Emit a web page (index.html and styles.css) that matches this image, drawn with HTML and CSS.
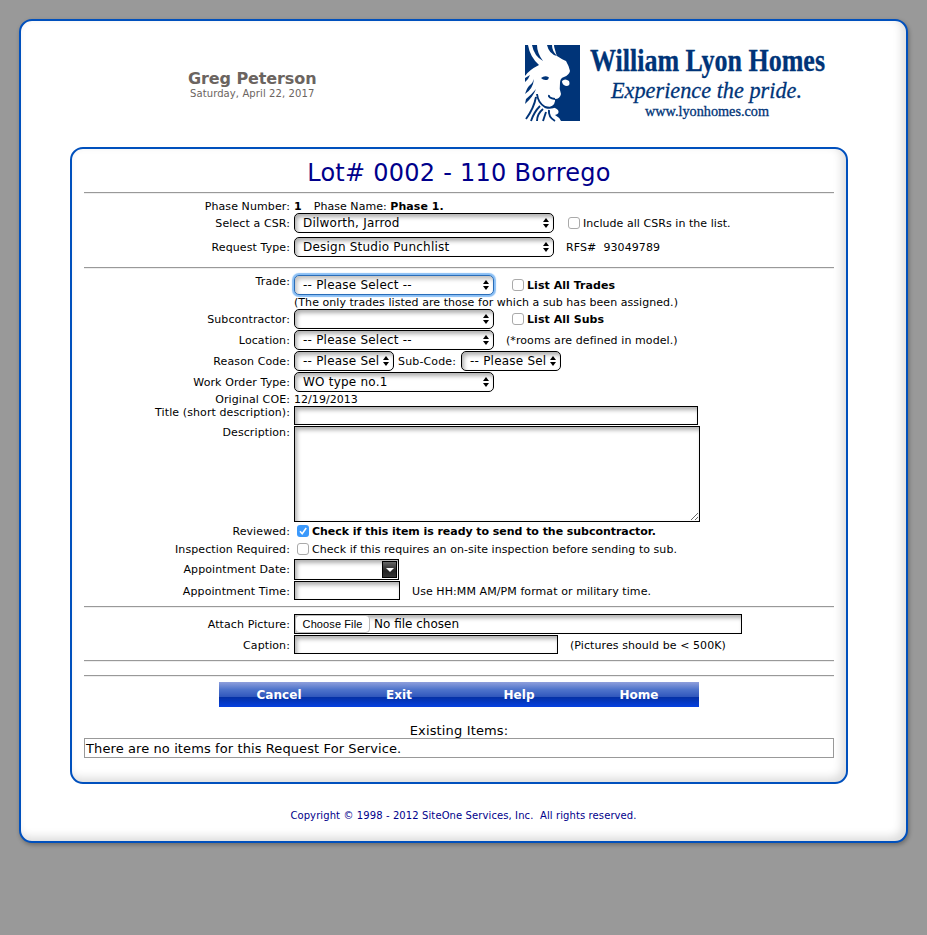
FILE: index.html
```html
<!DOCTYPE html>
<html lang="en">
<head>
<meta charset="utf-8">
<title>Lot# 0002 - 110 Borrego</title>
<link rel="stylesheet" href="styles.css">
</head>
<body>
<svg width="0" height="0" class="defs"><symbol id="arrows" viewBox="0 0 6 10"><path d="M3 0 6 4H0zM0 6h6L3 10z"/></symbol></svg>
<div class="frame">
  <header class="top">
    <div class="user"><div class="name">Greg Peterson</div><div class="date">Saturday, April 22, 2017</div></div>
    <svg class="logo" width="304" height="80" viewBox="0 0 304 80" role="img" aria-label="William Lyon Homes">
      <path class="navy" d="M0 0H55V76H0z"/>
      <path class="white" d="M3 0H32Q29 6 32 11Q38 15 41 16Q44 21 45 26Q44 30 39 32Q35 33 35 38Q34 44 36 49Q35 54 30 54Q31 59 25 62Q30 62 33 65Q35 69 30 70Q34 72 36 76H0V31Q4 25 14 20Q5 12 3 0z"/>
      <path class="navy" d="M7 0H12Q12 8 18 16Q9 11 7 0zM22 0H27Q27 6 32 11Q24 9 22 0zM29 0H32Q31 5 33 9Q29 5 29 0z"/>
      <path class="white" d="M37 36Q40 33 44 36Q46 41 41 41Q37 40 37 36z"/>
      <path class="navy" d="M16 33Q20 30 24 32.5L23 34.5Q19 36 16 33z"/>
      <path class="navy" d="M9 34Q8 44 0 49Q2 43 4 41Q8 38 9 34zM5 30 3 34 0 37V33zM11 44Q8 52 0 59L1 54Q7 49 11 44z"/>
      <path class="stroke" d="M24 50Q23 53 30 54"/>
      <path class="stroke" d="M12 49Q13 58 20 62Q26 64 31 61M11 52Q9 63 1 74M15 61Q9 67 6 76M18 64Q12 69 12 76M21 67 18 76M24 65Q23 72 30 76"/>
      <text class="brand" x="65" y="26" textLength="235" lengthAdjust="spacingAndGlyphs">William Lyon Homes</text>
      <text class="tagline" x="86" y="53" textLength="191" lengthAdjust="spacingAndGlyphs">Experience the pride.</text>
      <text class="site" x="120" y="71" textLength="124" lengthAdjust="spacingAndGlyphs">www.lyonhomes.com</text>
    </svg>
  </header>
  <main class="panel">
    <h1>Lot# 0002 - 110 Borrego</h1>
    <hr>
    <section class="group request">
      <div class="row line phase-row"><label>Phase Number:</label><div class="field"><b>1</b><span class="phase">Phase Name: <b>Phase 1.</b></span></div></div>
      <div class="row"><label>Select a CSR:</label><div class="field"><div class="select wide"><span>Dilworth, Jarrod</span><svg><use href="#arrows"/></svg></div><input class="check far" type="checkbox"><span class="caption-text">Include all CSRs in the list.</span></div></div>
      <div class="row spaced"><label>Request Type:</label><div class="field"><div class="select wide"><span>Design Studio Punchlist</span><svg><use href="#arrows"/></svg></div><span class="hint">RFS#&nbsp; 93049789</span></div></div>
    </section>
    <hr>
    <section class="group item">
      <div class="row trade"><label>Trade:</label><div class="field"><div class="select mid focus"><span>-- Please Select --</span><svg><use href="#arrows"/></svg></div><input class="check" type="checkbox"><b class="caption-text">List All Trades</b></div></div>
      <div class="row line note"><label></label><div class="field">(The only trades listed are those for which a sub has been assigned.)</div></div>
      <div class="row"><label>Subcontractor:</label><div class="field"><div class="select mid"><span></span><svg><use href="#arrows"/></svg></div><input class="check" type="checkbox"><b class="caption-text">List All Subs</b></div></div>
      <div class="row"><label>Location:</label><div class="field"><div class="select mid"><span>-- Please Select --</span><svg><use href="#arrows"/></svg></div><span class="hint">(*rooms are defined in model.)</span></div></div>
      <div class="row"><label>Reason Code:</label><div class="field"><div class="select small"><span>-- Please Sel</span><svg><use href="#arrows"/></svg></div><span class="sub">Sub-Code:</span><div class="select small"><span>-- Please Sel</span><svg><use href="#arrows"/></svg></div></div></div>
      <div class="row"><label>Work Order Type:</label><div class="field"><div class="select mid"><span>WO type no.1</span><svg><use href="#arrows"/></svg></div></div></div>
      <div class="row line coe"><label>Original COE:</label><div class="field">12/19/2013</div></div>
      <div class="row text toplabel"><label>Title (short description):</label><div class="field"><input class="box title" type="text"></div></div>
      <div class="row area toplabel"><label>Description:</label><div class="field"><div class="box textarea"><svg class="grip" width="9" height="9"><path d="M1 8 8 1M5 8 8 5"/></svg></div></div></div>
      <div class="row tick"><label>Reviewed:</label><div class="field"><span class="check near on"><svg width="12" height="12"><path d="M3 6.2 5.2 8.7 9.2 3"/></svg></span><b class="caption-text ready">Check if this item is ready to send to the subcontractor.</b></div></div>
      <div class="row tick"><label>Inspection Required:</label><div class="field"><input class="check near" type="checkbox"><span class="caption-text">Check if this requires an on-site inspection before sending to sub.</span></div></div>
      <div class="row date-row"><label>Appointment Date:</label><div class="field"><div class="box date-box"><span class="drop"><svg width="8" height="4"><path d="M0 0H8L4 4z"/></svg></span></div></div></div>
      <div class="row text time-row"><label>Appointment Time:</label><div class="field"><input class="box time" type="text"><span class="hint low">Use HH:MM AM/PM format or military time.</span></div></div>
    </section>
    <hr>
    <section class="group attach">
      <div class="row"><label>Attach Picture:</label><div class="field"><div class="box file"><span class="choose">Choose File</span><span class="none">No file chosen</span></div></div></div>
      <div class="row text"><label>Caption:</label><div class="field"><input class="box caption" type="text"><span class="hint low">(Pictures should be &lt; 500K)</span></div></div>
    </section>
    <hr>
    <hr class="second">
    <nav class="menu"><a>Cancel</a><a>Exit</a><a>Help</a><a>Home</a></nav>
    <div class="existing">Existing Items:</div>
    <div class="empty">There are no items for this Request For Service.</div>
  </main>
  <footer>Copyright © 1998 - 2012 SiteOne Services, Inc.&nbsp; All rights reserved.</footer>
</div>
</body>
</html>
```

FILE: styles.css
```css
* { box-sizing: border-box; }
body {
  margin: 0;
  padding: 19px;
  min-height: 935px;
  background: #999;
  font: 11px/14px "DejaVu Sans", sans-serif;
  letter-spacing: .05px;
  color: #000;
}
.defs { display: none; }
.frame {
  width: 889px;
  height: 824px;
  padding: 24px 49px 0;
  border: 2px solid #0050bd;
  border-radius: 13px;
  background: #fff;
  box-shadow: inset -4px -4px 10px rgba(0, 0, 0, .14), 1px 2px 4px rgba(0, 0, 0, .3);
}
.top { display: flex; height: 102px; justify-content: space-between; padding: 0 28px 0 118px; }
.user { padding-top: 25px; color: #6b6460; }
.name { font-size: 16px; line-height: 18px; font-weight: bold; letter-spacing: -.1px; }
.date { margin: -1px 0 0 2px; font-size: 10px; letter-spacing: .1px; }
.logo { display: block; overflow: visible; letter-spacing: 0; }
.navy, .logo text { fill: #003478; }
.white { fill: #fff; }
.stroke { fill: none; stroke: #003478; stroke-width: 1.9; }
.brand { font: bold 31px "Liberation Serif", serif; stroke: #003478; stroke-width: .3px; }
.tagline { font: italic 24px "Liberation Serif", serif; stroke: #003478; stroke-width: .3px; }
.site { font: 14px "Liberation Serif", serif; stroke: #003478; stroke-width: .3px; }
.panel {
  width: 778px;
  height: 637px;
  margin: 0;
  padding: 9px 12px 0;
  border: 2px solid #0050bd;
  border-radius: 13px;
  box-shadow: inset -4px -4px 10px rgba(0, 0, 0, .14);
}
h1 { margin: 0; height: 34px; font-size: 24px; line-height: 30px; letter-spacing: .25px; font-weight: normal; text-align: center; color: #00008b; }
hr { margin: 0; height: 2px; border: 0; border-top: 1px solid #999; border-bottom: 1px solid #eee; }
.group { display: flex; flex-direction: column; }
.request { padding-top: 5px; height: 73px; }
.item { padding-top: 6px; height: 337px; }
.attach { padding-top: 6px; height: 52px; }
.row { display: flex; height: 20px; margin-bottom: 1px; align-items: center; flex: none; }
.row > label { width: 206px; padding-top: 2px; letter-spacing: .1px; text-align: right; flex: none; }
.field { display: flex; align-items: center; margin-left: 4px; white-space: nowrap; }
.line { height: 14px; margin-bottom: 0; }
.line > label { padding-top: 0; }
.phase-row { padding-top: 2px; }
.note .field { padding-top: 2px; }
.spaced { margin-top: 3px; }
.trade { margin-bottom: 0; }
.trade > label { padding: 0 0 6px; }
.phase { margin-left: 12px; }
.coe { height: 13px; }
.text { height: 19px; }
.area { height: 96px; margin-bottom: 0; }
.toplabel { align-items: flex-start; }
.toplabel > label { padding-top: 0; }
.tick { height: 18px; margin-bottom: 0; }
.tick + .date-row { margin-top: 1px; }
.date-row { height: 21px; margin-bottom: 0; }
.date-row > label { padding-top: 0; }
.time-row { margin-top: 1px; }
.ready { letter-spacing: -.05px; }
.caption-text { padding-top: 1px; }
.select {
  display: flex;
  align-items: center;
  justify-content: space-between;
  height: 20px;
  padding: 0 4px 0 8px;
  border: 1px solid #000;
  border-radius: 5px;
  background: #fff;
  box-shadow: inset 2px 3px 4px rgba(0, 0, 0, .32);
  font-size: 12px;
  letter-spacing: .22px;
}
.select svg { width: 6px; height: 10px; flex: none; }
.wide { width: 260px; }
.mid { width: 200px; }
.small { width: 100px; }
.focus { border-color: #2a6db8; box-shadow: inset 2px 3px 4px rgba(0, 0, 0, .25), 0 0 1px 2px #8abff5; }
.sub { margin: 0 4px; padding-top: 1px; width: 59px; letter-spacing: .15px; }
.hint { margin-left: 12px; padding-top: 1px; letter-spacing: .08px; }
.low { padding-top: 2px; }
.check {
  appearance: none;
  width: 12px;
  height: 12px;
  margin: 0 3px 0 18px;
  border: 1px solid #aaa;
  border-radius: 3px;
  background: #fff;
}
.far { margin-left: 14px; }
.near { margin-left: 3px; }
.on { border: 0; background: #3b99fc; }
.on svg { display: block; }
.on path { fill: none; stroke: #fff; stroke-width: 1.6; }
.box {
  height: 19px;
  margin: 0;
  padding: 0;
  border: 1px solid #000;
  border-radius: 0;
  background: #fff;
  box-shadow: inset 2px 3px 4px rgba(0, 0, 0, .32);
}
.title { width: 404px; }
.textarea { display: flex; align-items: flex-end; justify-content: flex-end; width: 406px; height: 96px; }
.grip path { fill: none; stroke: #666; }
.date-box { display: flex; justify-content: flex-end; width: 105px; height: 21px; padding: 1px; }
.drop { display: flex; align-items: center; justify-content: center; width: 15px; height: 17px; border: 1px solid #000; background: linear-gradient(#666, #222 60%, #333); }
.drop path { fill: #fff; }
.time { width: 106px; }
.file { display: flex; align-items: center; width: 448px; height: 20px; padding-left: 0; font-size: 12px; letter-spacing: 0; }
.choose { height: 18px; width: 75px; border: 1px solid #bbb; border-radius: 4px; background: #fff; text-align: center; font: 11px/17px "Liberation Sans", sans-serif; letter-spacing: .1px; }
.none { margin-left: 4px; }
.caption { width: 264px; }
.second { margin-top: 13px; }
.menu {
  display: grid;
  grid-template-columns: repeat(4, 1fr);
  width: 480px;
  height: 25px;
  margin: 5px auto 0;
  background: linear-gradient(#8f9fdc 0, #4f74cb 30%, #3158bd 58%, #0430a4 60%, #0540e0 100%);
  color: #fff;
  font-size: 12px;
  line-height: 26px;
  font-weight: bold;
  text-align: center;
}
.existing { margin-top: 15px; height: 16px; line-height: 18px; font-size: 13px; letter-spacing: .15px; text-align: center; }
.empty { height: 20px; padding-left: 1px; border: 1px solid #999; font-size: 13px; line-height: 19px; letter-spacing: .1px; }
footer { margin-top: 25px; font-size: 10px; letter-spacing: .1px; text-align: center; color: #00008b; }
```
